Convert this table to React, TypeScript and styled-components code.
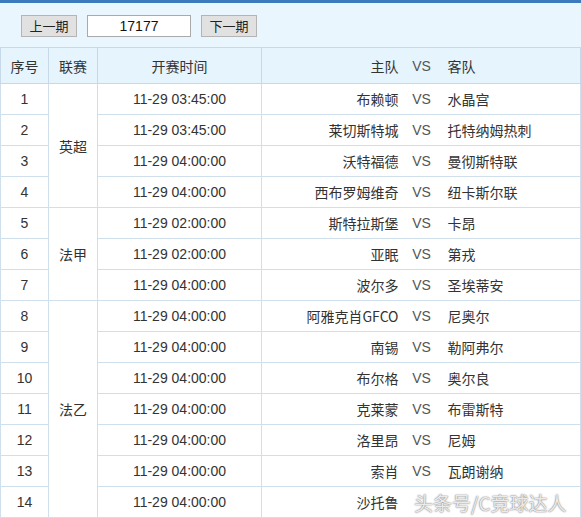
import React from "react";
import styled, { createGlobalStyle } from "styled-components";

const Global = createGlobalStyle`
  html, body { margin: 0; padding: 0; background: #fff; }
  body { font-family: "Liberation Sans", "Noto Sans CJK SC", Arial, sans-serif; font-size: 14px; color: #333; }
`;

const Page = styled.div`
  width: 581px;
  position: relative;
  border-top: 3px solid #3d79bd;
`;

const Toolbar = styled.div`
  height: 44px;
  background: #eaf6fe;
  display: flex;
  align-items: center;
  padding-left: 21px;
  gap: 10px;
  box-sizing: border-box;
  padding-top: 1px;
`;

const NavButton = styled.button`
  width: 56px;
  height: 22px;
  padding: 0;
  background: #e1e1e1;
  border: 1px solid #b4b4b4;
  font-family: "Noto Sans CJK SC", sans-serif;
  font-size: 13px;
  color: #222;
  line-height: 20px;
`;

const PeriodInput = styled.input`
  width: 104px;
  height: 22px;
  box-sizing: border-box;
  border: 1px solid #aaa;
  background: #fff;
  text-align: center;
  font-family: "Liberation Sans", Arial, sans-serif;
  font-size: 14px;
  color: #111;
  padding: 0;
`;

const Table = styled.table`
  width: 581px;
  border-collapse: collapse;
  table-layout: fixed;
`;

const Head = styled.th<{ $align?: string }>`
  height: 35px;
  background: #e6f4fd;
  border: 1px solid #c6d9e8;
  font-weight: normal;
  font-family: "Noto Sans CJK SC", sans-serif;
  font-size: 14px;
  color: #333;
  text-align: ${(p) => p.$align || "center"};
  padding: 0;
`;

const TeamHead = styled(Head)<{ $side: string }>`
  border-left: ${(p) => (p.$side === "left" ? "1px solid #c6d9e8" : "none")};
  border-right: ${(p) => (p.$side === "right" ? "1px solid #c6d9e8" : "none")};
  padding-left: ${(p) => (p.$side === "right" ? "3px" : "0")};
`;

const VsHead = styled(TeamHead)`
  font-family: "Liberation Sans", Arial, sans-serif;
  color: #555;
`;

const Cell = styled.td<{ $align?: string; $cjk?: boolean }>`
  height: 30px;
  border: 1px solid #cfdfec;
  padding: 0;
  text-align: ${(p) => p.$align || "center"};
  font-family: ${(p) =>
    p.$cjk ? '"Noto Sans CJK SC", sans-serif' : '"Liberation Sans", Arial, sans-serif'};
  font-size: 14px;
  color: #333;
  background: #fff;
`;

const TeamCell = styled(Cell)<{ $side: string }>`
  font-family: "Noto Sans CJK SC", sans-serif;
  border-left: ${(p) => (p.$side === "left" ? "1px solid #cfdfec" : "none")};
  border-right: ${(p) => (p.$side === "right" ? "1px solid #cfdfec" : "none")};
  padding-left: ${(p) => (p.$side === "right" ? "3px" : "0")};
`;

const VsCell = styled(Cell)`
  border-left: none;
  border-right: none;
  color: #555;
`;

const Watermark = styled.div`
  position: absolute;
  left: 414px;
  top: 486px;
  font-family: "Noto Sans CJK SC", sans-serif;
  font-size: 19px;
  color: rgba(255, 255, 255, 0.85);
  text-shadow: 0 0 1px #777, 0 0 2px #999;
  white-space: nowrap;
`;

type Row = { no: number; league?: string; span?: number; time: string; home: string; away: string };

const rows: Row[] = [
  { no: 1, league: "英超", span: 4, time: "11-29 03:45:00", home: "布赖顿", away: "水晶宫" },
  { no: 2, time: "11-29 03:45:00", home: "莱切斯特城", away: "托特纳姆热刺" },
  { no: 3, time: "11-29 04:00:00", home: "沃特福德", away: "曼彻斯特联" },
  { no: 4, time: "11-29 04:00:00", home: "西布罗姆维奇", away: "纽卡斯尔联" },
  { no: 5, league: "法甲", span: 3, time: "11-29 02:00:00", home: "斯特拉斯堡", away: "卡昂" },
  { no: 6, time: "11-29 02:00:00", home: "亚眠", away: "第戎" },
  { no: 7, time: "11-29 04:00:00", home: "波尔多", away: "圣埃蒂安" },
  { no: 8, league: "法乙", span: 7, time: "11-29 04:00:00", home: "阿雅克肖GFCO", away: "尼奥尔" },
  { no: 9, time: "11-29 04:00:00", home: "南锡", away: "勒阿弗尔" },
  { no: 10, time: "11-29 04:00:00", home: "布尔格", away: "奥尔良" },
  { no: 11, time: "11-29 04:00:00", home: "克莱蒙", away: "布雷斯特" },
  { no: 12, time: "11-29 04:00:00", home: "洛里昂", away: "尼姆" },
  { no: 13, time: "11-29 04:00:00", home: "索肖", away: "瓦朗谢纳" },
  { no: 14, time: "11-29 04:00:00", home: "沙托鲁", away: "" },
];

export default function App() {
  return (
    <Page>
      <Global />
      <Toolbar>
        <NavButton>上一期</NavButton>
        <PeriodInput defaultValue="17177" />
        <NavButton>下一期</NavButton>
      </Toolbar>
      <Table>
        <colgroup>
          <col style={{ width: 48 }} />
          <col style={{ width: 49 }} />
          <col style={{ width: 164 }} />
          <col style={{ width: 137 }} />
          <col style={{ width: 46 }} />
          <col />
        </colgroup>
        <thead>
          <tr>
            <Head>序号</Head>
            <Head>联赛</Head>
            <Head>开赛时间</Head>
            <TeamHead $side="left" $align="right">主队</TeamHead>
            <VsHead $side="mid">VS</VsHead>
            <TeamHead $side="right" $align="left">客队</TeamHead>
          </tr>
        </thead>
        <tbody>
          {rows.map((r) => (
            <tr key={r.no}>
              <Cell>{r.no}</Cell>
              {r.league && (
                <Cell rowSpan={r.span} $cjk>
                  {r.league}
                </Cell>
              )}
              <Cell>{r.time}</Cell>
              <TeamCell $side="left" $align="right">{r.home}</TeamCell>
              <VsCell>{r.away ? "VS" : ""}</VsCell>
              <TeamCell $side="right" $align="left">{r.away}</TeamCell>
            </tr>
          ))}
        </tbody>
      </Table>
      <Watermark>头条号/C竞球达人</Watermark>
    </Page>
  );
}
